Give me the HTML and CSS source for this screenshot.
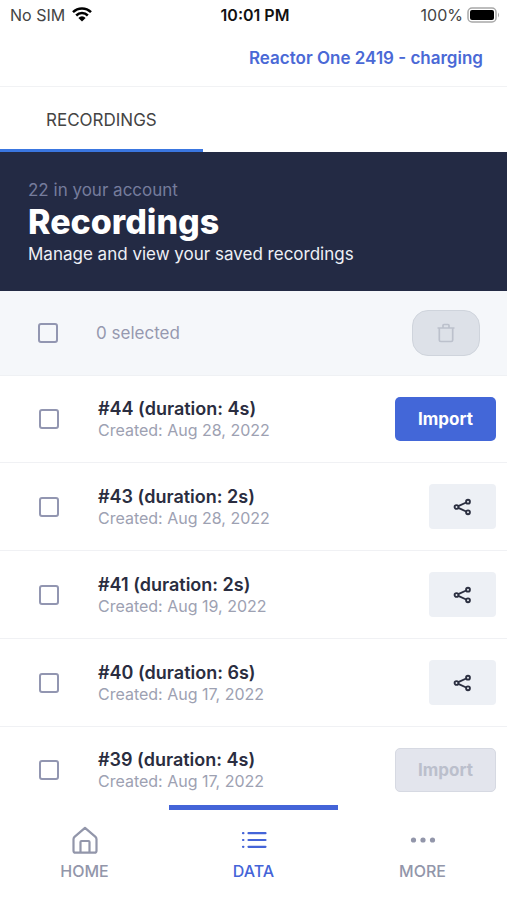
FILE: index.html
```html
<!DOCTYPE html>
<html lang="en">
<head>
<meta charset="utf-8">
<meta name="viewport" content="width=device-width, initial-scale=1">
<title>Recordings</title>
<link rel="stylesheet" href="styles.css">
</head>
<body>
<svg class="sprite" aria-hidden="true">
  <symbol id="share" viewBox="0 0 20 20">
    <g fill="none" stroke="currentColor" stroke-width="1.900">
      <circle cx="3.500" cy="10" r="1.900"/><circle cx="15" cy="4.700" r="1.900"/><circle cx="15" cy="15.300" r="1.900"/>
      <path d="M5.300 9.200l7.900-3.700M5.300 10.800l7.900 3.700"/>
    </g>
  </symbol>
</svg>
<div class="app">
  <div class="status">
    <span class="carrier">No SIM
      <svg width="20" height="15" viewBox="0 0 20 15" aria-hidden="true">
        <g fill="none" stroke="#000" stroke-width="2.500"><path d="M1 5.200a12.800 12.800 0 0 1 18 0"/><path d="M4.200 8.500a8.200 8.200 0 0 1 11.600 0"/></g>
        <path d="M6.400 10.900a5 5 0 0 1 7.200 0L10 14.600z"/>
      </svg>
    </span>
    <span class="clock">10:01 PM</span>
    <span class="power">100%
      <svg width="33" height="16" viewBox="0 0 33 16" aria-hidden="true">
        <rect x="1" y="1" width="28" height="14" rx="4" fill="#fff" stroke="#a8a8a8" stroke-width="1.500"/>
        <rect x="3" y="3" width="24" height="10" rx="2" fill="#000"/>
        <path d="M31 5.500q2 2.500 0 5z" fill="#a8a8a8"/>
      </svg>
    </span>
  </div>
  <header class="device"><a href="#device">Reactor One 2419 - charging</a></header>
  <nav class="tabs"><a class="tab" href="#recordings">RECORDINGS</a></nav>
  <section class="hero">
    <p class="count">22 in your account</p>
    <h1>Recordings</h1>
    <p class="lead">Manage and view your saved recordings</p>
  </section>
  <div class="selection">
    <input class="check" type="checkbox" id="all">
    <label class="selected" for="all">0 selected</label>
    <button class="trash" type="button" disabled aria-label="Delete selected">
      <svg width="18" height="20" viewBox="0 0 18 20" fill="none" stroke="currentColor" stroke-width="1.700" aria-hidden="true"><path d="M.5 5h17M2.300 5v12q0 1.500 1.500 1.500h10.400q1.500 0 1.500-1.500V5M6 5V2.500q0-1 1-1h4q1 0 1 1V5"/></svg>
    </button>
  </div>
  <ul class="list">
    <li class="row">
      <input class="check" type="checkbox" id="r44">
      <label class="info" for="r44"><span class="name">#44 (duration: 4s)</span><span class="date">Created: Aug 28, 2022</span></label>
      <button class="import" type="button">Import</button>
    </li>
    <li class="row">
      <input class="check" type="checkbox" id="r43">
      <label class="info" for="r43"><span class="name">#43 (duration: 2s)</span><span class="date">Created: Aug 28, 2022</span></label>
      <button class="share" type="button" aria-label="Share"><svg width="20" height="20" aria-hidden="true"><use href="#share"/></svg></button>
    </li>
    <li class="row">
      <input class="check" type="checkbox" id="r41">
      <label class="info" for="r41"><span class="name">#41 (duration: 2s)</span><span class="date">Created: Aug 19, 2022</span></label>
      <button class="share" type="button" aria-label="Share"><svg width="20" height="20" aria-hidden="true"><use href="#share"/></svg></button>
    </li>
    <li class="row">
      <input class="check" type="checkbox" id="r40">
      <label class="info" for="r40"><span class="name">#40 (duration: 6s)</span><span class="date">Created: Aug 17, 2022</span></label>
      <button class="share" type="button" aria-label="Share"><svg width="20" height="20" aria-hidden="true"><use href="#share"/></svg></button>
    </li>
    <li class="row">
      <input class="check" type="checkbox" id="r39">
      <label class="info" for="r39"><span class="name">#39 (duration: 4s)</span><span class="date">Created: Aug 17, 2022</span></label>
      <button class="import" type="button" disabled>Import</button>
    </li>
  </ul>
  <nav class="bottom">
    <a href="#home">
      <svg width="28" height="28" viewBox="0 0 28 28" fill="none" stroke="currentColor" stroke-width="2.200" stroke-linejoin="round" aria-hidden="true"><path d="M14 1.800L3.500 10.900Q2.500 11.900 2.500 13.200v11.500q0 2 2 2h19q2 0 2-2V13.200q0-1.300-1-2.300zM9.500 26.500V16q0-1 1-1h7q1 0 1 1v10.500"/></svg>
      HOME</a>
    <a class="active" href="#data">
      <svg width="28" height="28" viewBox="0 0 28 28" fill="none" stroke="currentColor" stroke-width="2.200" stroke-linecap="round" aria-hidden="true"><path d="M8.500 7.200h17M8.500 14h17M8.500 20.800h17M3 7.200h.4M3 14h.4M3 20.800h.4"/></svg>
      DATA</a>
    <a href="#more">
      <svg width="28" height="28" viewBox="0 0 28 28" fill="currentColor" aria-hidden="true"><circle cx="4.500" cy="14" r="2.600"/><circle cx="14" cy="14" r="2.600"/><circle cx="23.500" cy="14" r="2.600"/></svg>
      MORE</a>
  </nav>
</div>
</body>
</html>
```
FILE: styles.css
```css
* { box-sizing: border-box; }
body { margin: 0; background: #fff; color: #2a2d40; font-family: Inter, "Liberation Sans", sans-serif; font-size: 17px; line-height: 20px; }
p, h1, ul { margin: 0; padding: 0; }
a { color: inherit; text-decoration: none; }
button { font: inherit; border: 0; padding: 0; }
svg { display: block; flex: none; }
.sprite { display: none; }
.app { display: flex; flex-direction: column; min-height: 100vh; }

.status { display: grid; grid-template-columns: 1fr auto 1fr; align-items: center; height: 29px; padding: 0 7px 0 10px; font-size: 16px; color: #444; }
.carrier, .power { display: flex; align-items: center; gap: 7px; }
.power { justify-content: flex-end; gap: 4px; }
.clock { font-weight: 600; color: #111; }

.device { display: flex; align-items: center; justify-content: flex-end; height: 58px; padding: 0 24px; border-bottom: 1px solid #f1f2f4; color: #4a69d6; font-weight: 600; }
.tabs { display: flex; height: 65px; }
.tab { display: flex; align-items: center; justify-content: center; width: 40%; padding-top: 3px; border-bottom: 3px solid #3a76e0; color: #444; }

.hero { padding: 28px 28px 27px; background: #232a44; color: #eef0f6; }
.count { color: #757c9c; }
h1 { font-size: 34px; line-height: 44px; font-weight: 800; color: #fff; }

.selection { display: flex; align-items: center; height: 85px; padding: 0 27px 0 38px; background: #f5f7fa; border-bottom: 1px solid #eff1f4; }
.check { appearance: none; flex: none; width: 20px; height: 20px; margin: 0; border: 2px solid #9296b1; border-radius: 3px; background: transparent; }
.selected { flex: 1; margin-left: 38px; color: #9599af; }
.trash { display: flex; align-items: center; justify-content: center; width: 68px; height: 46px; border: 1px solid #cfd4dc; border-radius: 16px; background: #dde1e8; color: #bcc1cc; }

.list { display: flex; flex: 1; flex-direction: column; list-style: none; }
.row { display: flex; flex: 1; align-items: center; min-height: 80px; padding: 0 11px 0 39px; border-bottom: 1px solid #f0f1f4; }
.row:last-child { border-bottom-color: transparent; }
.info { display: flex; flex: 1; flex-direction: column; margin-left: 39px; }
.name { font-size: 18px; font-weight: 600; line-height: 22px; }
.date { font-size: 16px; color: #9da1b2; }
.import { width: 101px; height: 44px; border-radius: 5px; background: #4367d8; color: #fff; font-weight: 700; }
.import:disabled { border: 1px solid #d6d9e2; background: #e3e5ed; color: #bbbfcc; }
.share { display: flex; align-items: center; justify-content: center; width: 67px; height: 45px; border-radius: 4px; background: #edf0f5; color: #2b2f40; }

.bottom { display: grid; grid-template-columns: repeat(3, 1fr); height: 86px; background: #fff; color: #9296aa; font-size: 16px; font-weight: 500; }
.bottom a { position: relative; display: flex; flex-direction: column; align-items: center; gap: 7px; padding-top: 12px; }
.bottom .active { color: #4464d8; }
.bottom .active::before { content: ""; position: absolute; top: -9px; left: 0; right: 0; height: 5px; background: #4464d8; }
```
